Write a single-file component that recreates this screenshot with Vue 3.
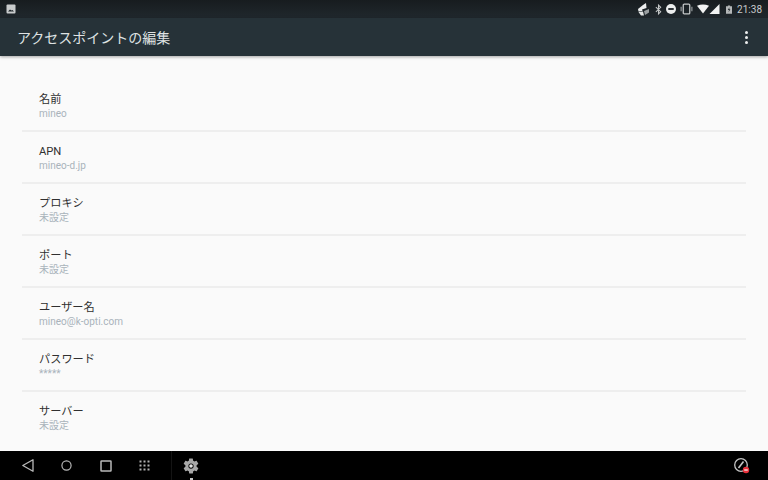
<template>
  <div class="screen">
    <div class="status-bar">
      <svg class="pic" width="10" height="10" viewBox="0 0 10 10">
        <rect x="0.5" y="0.5" width="9" height="9" rx="1" fill="#c9cccd" />
        <path d="M2 7.5 L4 5.5 L5.5 6.5 L6.5 6 L8 7.5Z" fill="#1c2327" />
      </svg>
      <div class="status-right">
        <svg width="11" height="13" viewBox="0 0 11 13" class="ic-pie">
          <path d="M5 2 L8 0 L8.5 5 L4 6.5 L4.5 8 L0.5 8.5 L0 6 Z" fill="#eceeee" />
          <path d="M0.5 9 L5 8.5 L6 12.5 L3 12.5 Z" fill="#e2e4e4" />
          <path d="M6 8 L11 6 L11 9.5 L7 12 Z" fill="#9ba0a2" />
        </svg>
        <svg width="7" height="11" viewBox="0 0 8 12" class="ic-bt">
          <path d="M1 3.2 L6.5 8.5 L4 11 V1 L6.5 3.5 L1 8.8" fill="none" stroke="#c4c7c8" stroke-width="1.2" />
        </svg>
        <svg width="10" height="10" viewBox="0 0 11 11" class="ic-dnd">
          <circle cx="5.5" cy="5.5" r="5.5" fill="#eceeee" />
          <rect x="2.5" y="4.5" width="6" height="2" fill="#1c2327" />
        </svg>
        <svg width="13" height="12" viewBox="0 0 14 12" class="ic-vib">
          <rect x="3.5" y="0.8" width="7" height="10.4" rx="1" fill="none" stroke="#c4c7c8" stroke-width="1.4" />
          <path d="M1.2 3.5 V8.5 M12.8 3.5 V8.5" stroke="#9ba0a2" stroke-width="1.2" />
        </svg>
        <svg width="12" height="10" viewBox="0 0 13 10" class="ic-wifi">
          <path d="M0 1.5 Q6.5 -1.5 13 1.5 L6.5 10Z" fill="#f2f3f3" />
        </svg>
        <svg width="11" height="10" viewBox="0 0 10 10" class="ic-sig">
          <path d="M0 10 L10 0 V10Z" fill="#f2f3f3" />
        </svg>
        <svg width="6" height="11" viewBox="0 0 8 11" class="ic-bat">
          <path d="M2.5 0 H5.5 V1 H8 V11 H0 V1 H2.5Z" fill="#b4b7b8" />
          <path d="M4.5 2.5 L2.5 6 H4 L3.5 9 L5.8 5 H4.3Z" fill="#1c2327" />
        </svg>
        <span class="clock">21:38</span>
      </div>
    </div>

    <header class="app-bar">
      <h1 class="title">アクセスポイントの編集</h1>
      <div class="more"><i></i><i></i><i></i></div>
    </header>

    <main class="content">
      <div v-for="item in items" :key="item.label" class="row">
        <div class="label">{{ item.label }}</div>
        <div class="value">{{ item.value }}</div>
      </div>
    </main>

    <footer class="nav-bar">
      <div class="nav-keys">
        <svg width="14" height="15" viewBox="0 0 14 14">
          <path d="M12 1.2 V12.8 L1.8 7Z" fill="none" stroke="#b9b9b9" stroke-width="1.3" stroke-linejoin="round" />
        </svg>
        <svg width="11" height="11" viewBox="0 0 12 12">
          <circle cx="6" cy="6" r="5" fill="none" stroke="#b9b9b9" stroke-width="1.3" />
        </svg>
        <svg width="12" height="12" viewBox="0 0 12 12">
          <rect x="1" y="1" width="10" height="10" rx="0.5" fill="none" stroke="#b9b9b9" stroke-width="1.5" />
        </svg>
        <svg width="11" height="11" viewBox="0 0 11 11">
          <g fill="#b0b0b0">
            <template v-for="y in [0.5, 4.5, 8.5]" :key="y">
              <rect v-for="x in [0.5, 4.5, 8.5]" :key="x" :x="x" :y="y" width="2" height="2" />
            </template>
          </g>
        </svg>
      </div>
      <div class="nav-gear">
        <svg width="18" height="18" viewBox="0 0 24 24">
          <path fill="#a8a8a8" fill-rule="evenodd" d="M19.4 13c.04-.33.1-.66.1-1s-.06-.67-.1-1l2.1-1.6c.2-.15.25-.42.12-.64l-2-3.46c-.12-.22-.39-.3-.61-.22l-2.49 1c-.52-.4-1.08-.73-1.69-.98l-.38-2.65A.49.49 0 0 0 14 2h-4c-.25 0-.46.18-.49.42l-.38 2.65c-.61.25-1.17.59-1.69.98l-2.49-1c-.23-.09-.49 0-.61.22l-2 3.46c-.13.22-.07.49.12.64L4.6 11c-.04.33-.1.66-.1 1s.06.67.1 1l-2.1 1.6c-.2.15-.25.42-.12.64l2 3.46c.12.22.39.3.61.22l2.49-1c.52.4 1.08.73 1.69.98l.38 2.65c.03.24.24.42.49.42h4c.25 0 .46-.18.49-.42l.38-2.65c.61-.25 1.17-.59 1.69-.98l2.49 1c.23.09.49 0 .61-.22l2-3.46c.13-.22.07-.49-.12-.64L19.4 13zM12 15.5a3.5 3.5 0 1 1 0-7 3.5 3.5 0 0 1 0 7z" />
          <circle cx="12" cy="12" r="2.4" fill="#e6e6e6" />
        </svg>
        <span class="gear-dot"></span>
      </div>
      <div class="nav-speed">
        <svg width="18" height="18" viewBox="0 0 18 18">
          <circle cx="8" cy="8" r="6.3" fill="none" stroke="#c4c4c4" stroke-width="1.3" />
          <path d="M5.5 11 L10.5 4.5" stroke="#c4c4c4" stroke-width="1.6" />
          <circle cx="13" cy="13" r="3.2" fill="#e8303a" />
          <rect x="11.2" y="12.4" width="3.6" height="1.2" fill="#fff" />
        </svg>
      </div>
    </footer>
  </div>
</template>

<script setup>
const items = [
  { label: '名前', value: 'mineo' },
  { label: 'APN', value: 'mineo-d.jp' },
  { label: 'プロキシ', value: '未設定' },
  { label: 'ポート', value: '未設定' },
  { label: 'ユーザー名', value: 'mineo@k-opti.com' },
  { label: 'パスワード', value: '*****' },
  { label: 'サーバー', value: '未設定' }
]
</script>

<style>
html, body { margin: 0; padding: 0; }
</style>

<style scoped>
.screen {
  width: 768px;
  height: 480px;
  display: flex;
  flex-direction: column;
  overflow: hidden;
  background: #fafafa;
  font-family: Roboto, "Noto Sans CJK JP", sans-serif;
}
.status-bar {
  height: 18px;
  flex-shrink: 0;
  display: flex;
  align-items: center;
  justify-content: space-between;
  padding: 0 6px;
  background: linear-gradient(#171c1f, #20282d);
}
.status-right {
  display: flex;
  align-items: center;
}
.ic-pie { margin-right: 6px; }
.ic-bt { margin-right: 4px; }
.ic-dnd { margin-right: 4px; }
.ic-vib { margin-right: 4px; }
.ic-wifi { margin-right: 0; }
.ic-sig { margin-right: 6px; }
.ic-bat { margin-right: 5px; }
.clock {
  font-size: 10px;
  color: #c8cbcc;
}
.app-bar {
  height: 38px;
  flex-shrink: 0;
  display: flex;
  align-items: center;
  justify-content: space-between;
  padding: 0 20px 0 17px;
  background: #263238;
  box-shadow: 0 1px 3px rgba(0, 0, 0, 0.35);
  position: relative;
}
.title {
  margin: 0 0 1px;
  font-size: 14px;
  font-weight: 400;
  color: #dfe2e3;
}
.more {
  display: flex;
  flex-direction: column;
  gap: 2px;
}
.more i {
  width: 3px;
  height: 3px;
  border-radius: 50%;
  background: #eceeee;
}
.content {
  flex: 1;
  min-height: 0;
  padding: 24px 22px 0;
}
.row {
  height: 52px;
  padding: 12px 0 0 17px;
  box-sizing: border-box;
  border-bottom: 2px solid #eeeeee;
}
.row:last-child { border-bottom: 0; }
.label {
  font-size: 11.2px;
  line-height: 16px;
  color: #303030;
}
.value {
  margin-top: -1px;
  font-size: 10px;
  line-height: 14px;
  color: #a9b3bb;
}
.nav-bar {
  height: 29px;
  flex-shrink: 0;
  display: flex;
  align-items: center;
  background: #000;
}
.nav-keys {
  width: 171px;
  height: 100%;
  padding-left: 8px;
  box-sizing: border-box;
  display: grid;
  grid-template-columns: repeat(4, 39px);
  align-items: center;
  justify-items: center;
}
.nav-gear {
  width: 39px;
  height: 100%;
  border-left: 1px solid #141414;
  box-sizing: border-box;
  display: flex;
  align-items: center;
  justify-content: center;
  position: relative;
}
.gear-dot {
  position: absolute;
  left: 18px;
  bottom: 0;
  width: 3px;
  height: 2px;
  background: #c8c8c8;
}
.nav-speed {
  margin-left: auto;
  margin-right: 17px;
  display: flex;
}
</style>
